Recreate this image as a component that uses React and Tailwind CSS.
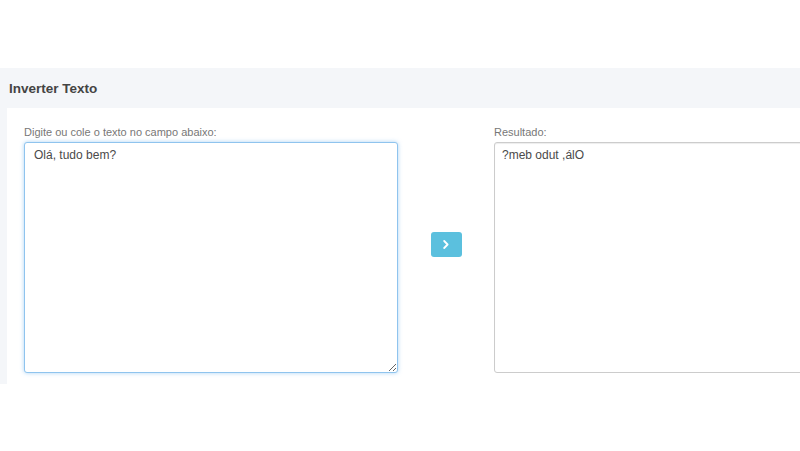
import React, { useEffect, useRef } from "react";

const font = { fontFamily: '"Liberation Sans", Arial, sans-serif' };

function ChevronRight() {
	return (
		<svg width="6" height="9" viewBox="0 0 6 9" fill="none">
			<path d="M1.2 1l3.4 3.5L1.2 8" stroke="white" strokeWidth="1.8" strokeLinecap="round" strokeLinejoin="round" />
		</svg>
	);
}

export default function App() {
	const input = "Olá, tudo bem?";
	const output = input.split("").reverse().join("");
	const ref = useRef(null);

	useEffect(() => {
		const el = ref.current;
		if (!el) return;
		el.focus();
		el.setSelectionRange(input.length, input.length);
	}, []);

	return (
		<div className="w-[800px] h-[451px] overflow-hidden bg-white" style={font}>
			<div className="mt-[68px] bg-[#f4f6f9]">
				<div className="h-[40px] flex items-center pl-[9px] pt-[2px]">
					<h1 className="text-[13.5px] font-bold text-[#444]">Inverter Texto</h1>
				</div>
				<div className="ml-[7px] bg-white pt-[16px] pb-[11px] pl-[17px] flex">
					<div className="w-[374px] shrink-0">
						<label className="block text-[11px] leading-[16px] text-[#777] mb-[2px]">
							Digite ou cole o texto no campo abaixo:
						</label>
						<textarea
							ref={ref}
							defaultValue={input}
							className="block w-[374px] h-[231px] rounded-[3px] border border-[#8fc4ee] shadow-[0_0_4px_rgba(102,175,233,0.55)] outline-none pt-[4px] pl-[9px] pr-[10px] text-[12px] leading-[17px] text-[#4a4a4a] bg-white"
							style={font}
						/>
					</div>
					<div className="w-[96px] shrink-0 flex justify-center pt-[108px]">
						<button className="w-[31px] h-[25px] rounded-[3px] bg-[#5bc0de] flex items-center justify-center">
							<ChevronRight />
						</button>
					</div>
					<div className="w-[374px] shrink-0">
						<label className="block text-[11px] leading-[16px] text-[#777] mb-[2px]">Resultado:</label>
						<textarea
							readOnly
							value={output}
							className="block w-[374px] h-[231px] rounded-[3px] border border-[#cccccc] shadow-[inset_0_1px_1px_rgba(0,0,0,0.075)] outline-none pt-[4px] pl-[7px] pr-[10px] text-[12px] leading-[17px] text-[#4a4a4a] bg-white resize-none"
							style={font}
						/>
					</div>
				</div>
			</div>
		</div>
	);
}
